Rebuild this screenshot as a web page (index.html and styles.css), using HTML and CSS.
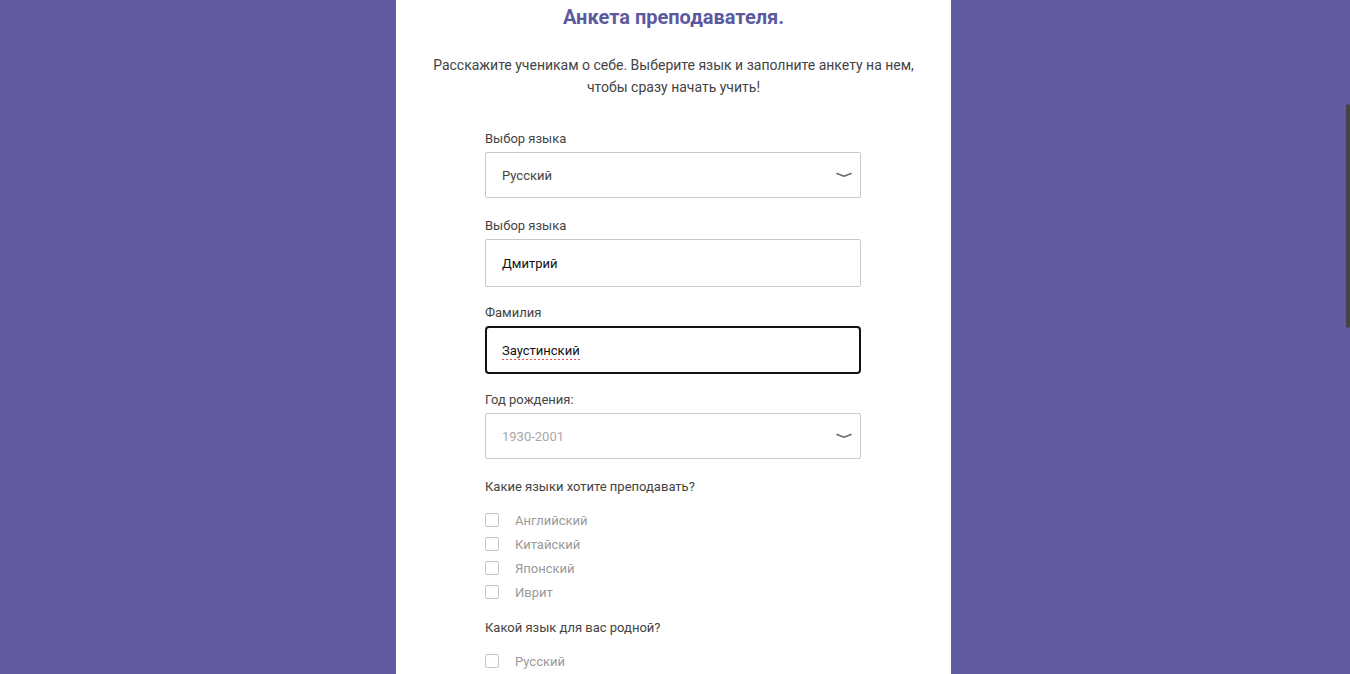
FILE: index.html
```html
<!DOCTYPE html>
<html lang="ru">
<head>
<meta charset="utf-8">
<title>Анкета преподавателя</title>
<link rel="stylesheet" href="styles.css">
</head>
<body>
<main class="panel">
  <h1 class="title">Анкета преподавателя.</h1>
  <p class="intro">Расскажите ученикам о себе. Выберите язык и заполните анкету на нем,<br>чтобы сразу начать учить!</p>
  <form class="form">
    <div class="group">
      <div class="label">Выбор языка</div>
      <div class="field select">
        <span class="value">Русский</span>
        <svg class="chev" width="16" height="6" viewBox="0 0 16 6"><path d="M1 1.5 L8 4.3 L15 1.5" fill="none" stroke="#6d6d6d" stroke-width="1.6" stroke-linecap="round" stroke-linejoin="round"/></svg>
      </div>
    </div>
    <div class="group group-input">
      <div class="label">Выбор языка</div>
      <div class="field input"><span class="value dark">Дмитрий</span></div>
    </div>
    <div class="group group-input">
      <div class="label">Фамилия</div>
      <div class="field input focused"><span class="value dark spell">Заустинский</span></div>
    </div>
    <div class="group">
      <div class="label">Год рождения:</div>
      <div class="field select">
        <span class="value muted">1930-2001</span>
        <svg class="chev" width="16" height="6" viewBox="0 0 16 6"><path d="M1 1.5 L8 4.3 L15 1.5" fill="none" stroke="#6d6d6d" stroke-width="1.6" stroke-linecap="round" stroke-linejoin="round"/></svg>
      </div>
    </div>
    <div class="question">Какие языки хотите преподавать?</div>
    <ul class="checks">
      <li class="check"><span class="box"></span>Английский</li>
      <li class="check"><span class="box"></span>Китайский</li>
      <li class="check"><span class="box"></span>Японский</li>
      <li class="check"><span class="box"></span>Иврит</li>
    </ul>
    <div class="question q2">Какой язык для вас родной?</div>
    <ul class="checks">
      <li class="check"><span class="box"></span>Русский</li>
    </ul>
  </form>
</main>
<div class="scroll-thumb"></div>
</body>
</html>
```

FILE: styles.css
```css
html, body {
  margin: 0;
  padding: 0;
  height: 100%;
  overflow: hidden;
}
body {
  background: #5f5b9e;
  font-family: Roboto, "Noto Sans", "Liberation Sans", sans-serif;
  color: #444;
}
.panel {
  width: 555px;
  margin: 0 0 0 396px;
  min-height: 674px;
  background: #fff;
  box-sizing: border-box;
  padding-top: 5px;
}
.title {
  margin: 0;
  font-size: 20px;
  line-height: 24px;
  font-weight: 700;
  color: #5c5a9f;
  text-align: center;
}
.intro {
  margin: 25px 0 0;
  font-size: 14px;
  line-height: 22px;
  text-align: center;
  color: #444;
}
.form {
  width: 376px;
  margin: 33px 0 0 89px;
}
.group {
  margin-bottom: 20px;
}
.group-input {
  margin-bottom: 18px;
}
.label, .question {
  font-size: 13px;
  line-height: 16px;
  color: #444;
}
.label {
  margin-bottom: 5px;
}
.field {
  height: 46px;
  box-sizing: border-box;
  border: 1px solid #c9c9c9;
  border-radius: 2px;
  display: flex;
  align-items: center;
  justify-content: space-between;
  padding: 0 8px 0 16px;
  font-size: 13px;
}
.field.input {
  height: 48px;
}
.field.focused {
  border: 2px solid #111;
  border-radius: 4px;
  padding-left: 15px;
}
.value {
  color: #444;
}
.value.dark {
  color: #111;
}
.value.muted {
  color: #a8a8a8;
}
.spell {
  background-image: repeating-linear-gradient(90deg, #e8505a 0 2px, transparent 2px 4px);
  background-repeat: no-repeat;
  background-size: 100% 1px;
  background-position: 0 100%;
  padding: 2px 0;
}
.chev {
  display: block;
}
.q2 {
  margin-top: 16px;
}
.checks {
  list-style: none;
  margin: 13px 0 0;
  padding: 0;
}
.check {
  display: flex;
  align-items: center;
  height: 24px;
  font-size: 13px;
  color: #9a9a9a;
}
.box {
  width: 12px;
  height: 12px;
  border: 1px solid #c4c4c4;
  border-radius: 2px;
  margin-right: 16px;
  flex: none;
}
.scroll-thumb {
  position: absolute;
  right: 0;
  top: 104px;
  width: 4px;
  height: 224px;
  background: #444;
  border-radius: 2px;
}
```
